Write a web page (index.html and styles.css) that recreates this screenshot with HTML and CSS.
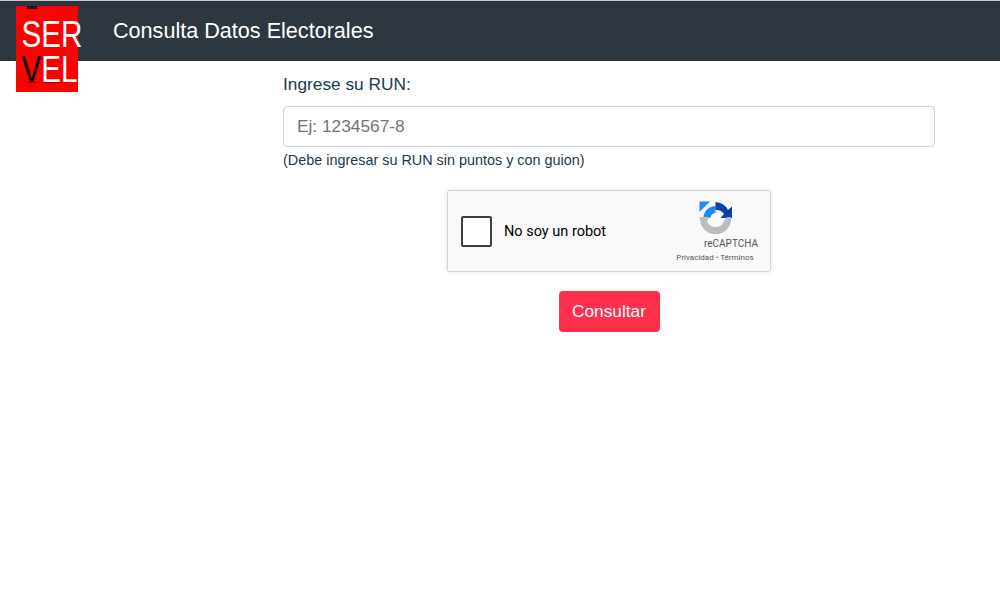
FILE: index.html
```html
<!DOCTYPE html>
<html lang="en">
<head>
    <meta charset="UTF-8">
    <meta name="viewport" content="width=device-width, initial-scale=1.0">
    <title>Consulta Datos Electorales</title>
    <link rel="stylesheet" href="styles.css">
</head>
<body>
<header class="navbar">
    <div class="logo">
        <span class="logo-mark"></span>
        <span class="logo-line">SER</span>
        <span class="logo-line"><span class="logo-v">V</span>EL</span>
        <span class="logo-rule"></span>
    </div>
    <h1 class="navbar-title">Consulta Datos Electorales</h1>
</header>

<main class="content">
    <form class="run-form">
        <label class="run-label" for="run">Ingrese su RUN:</label>
        <input class="run-input" type="text" id="run" placeholder="Ej: 1234567-8">
        <small class="run-help">(Debe ingresar su RUN sin puntos y con guion)</small>

        <div class="captcha">
            <span class="captcha-check"></span>
            <span class="captcha-text">No soy un robot</span>
            <div class="captcha-brand">
                <svg class="captcha-icon" viewBox="0 0 33 33" width="33" height="33">
                    <path d="M4.5 17 A12 12 0 0 1 16.5 5 L16.5 12 A5 5 0 0 0 11.5 17 Z" fill="#1c8cf8" />
                    <path d="M0.5 0.5 L11 0.5 L0.5 11 Z" fill="#1c8cf8" />
                    <path d="M16.5 1 A15 15 0 0 1 29 9 L33 5.5 L33 17 L21.5 17 L25 13 A9 9 0 0 0 16.5 9 Z" fill="#0a3fb0" />
                    <path d="M0.5 16 L11 16 L8 20 A9 9 0 0 0 25 20 L28 16 L32 16 A15.5 15.5 0 0 1 2 23 Z" fill="#bdbdbd" />
                </svg>
                <span class="captcha-name">reCAPTCHA</span>
                <span class="captcha-links">Privacidad • Términos</span>
            </div>
        </div>

        <button class="submit-btn" type="button">Consultar</button>
    </form>
</main>
</body>
</html>
```

FILE: styles.css
```css
* {
    box-sizing: border-box;
    margin: 0;
    padding: 0;
}

body {
    font-family: "Liberation Sans", Arial, sans-serif;
    background: white;
    color: #1b3a4b;
}

.navbar {
    position: relative;
    display: flex;
    align-items: center;
    height: 61px;
    padding-left: 113px;
    background: #2e373f;
    border-top: 1px solid #c9c9c9;
}

.navbar-title {
    font-size: 21.6px;
    font-weight: normal;
    color: white;
}

.logo {
    position: absolute;
    top: 5px;
    left: 16px;
    width: 62px;
    height: 86px;
    padding-top: 11px;
    background: #fe0000;
    color: white;
    text-align: center;
    font-family: "Liberation Sans Narrow", "Liberation Sans", sans-serif;
    font-size: 36px;
    line-height: 35px;
}

.logo-line {
    display: block;
    transform: scaleX(0.82);
}

.logo-v {
    color: black;
}

.logo-mark {
    position: absolute;
    top: 0;
    left: 11px;
    width: 10px;
    height: 3px;
    background: #1a1a1a;
}

.logo-rule {
    position: absolute;
    bottom: 9px;
    left: 10px;
    right: 10px;
    height: 1px;
    background: #a50a0a;
}

.content {
    padding: 13px 65px 0 283px;
}

.run-form {
    display: flex;
    flex-direction: column;
    align-items: flex-start;
}

.run-label {
    font-size: 17.3px;
    line-height: 20px;
    margin-bottom: 12px;
}

.run-input {
    width: 100%;
    height: 41px;
    padding: 0 13px;
    border: 1px solid #ced4da;
    border-radius: 4px;
    font-family: inherit;
    font-size: 17.3px;
    color: #495057;
}

.run-input::placeholder {
    color: #6c757d;
    opacity: 1;
}

.run-help {
    font-size: 14.4px;
    line-height: 17px;
    margin-top: 5px;
}

.captcha {
    display: flex;
    align-items: center;
    align-self: center;
    width: 324px;
    height: 82px;
    margin-top: 21px;
    padding: 0 13px;
    background: #f9f9f9;
    border: 1px solid #d3d3d3;
    border-radius: 3px;
    box-shadow: 0 0 4px 1px rgba(0,0,0,0.08);
    color: black;
    font-family: Roboto, sans-serif;
}

.captcha-check {
    width: 31px;
    height: 31px;
    background: white;
    border: 2px solid #3f3f3f;
    border-radius: 2px;
}

.captcha-text {
    flex: 1;
    margin-left: 12px;
    font-size: 14.5px;
}

.captcha-brand {
    display: flex;
    flex-direction: column;
    align-items: center;
    width: 86px;
    margin-right: -1px;
    color: #555;
}

.captcha-icon {
    display: block;
    margin-top: 3px;
}

.captcha-name {
    align-self: flex-end;
    margin-top: 3px;
    font-size: 10px;
    line-height: 13px;
}

.captcha-links {
    margin-top: 2px;
    font-size: 8px;
    line-height: 12px;
    white-space: nowrap;
}

.submit-btn {
    align-self: center;
    width: 101px;
    height: 41px;
    margin-top: 19px;
    background: #fe304b;
    color: white;
    border: none;
    border-radius: 4px;
    font-family: inherit;
    font-size: 17.3px;
    cursor: pointer;
}
```
